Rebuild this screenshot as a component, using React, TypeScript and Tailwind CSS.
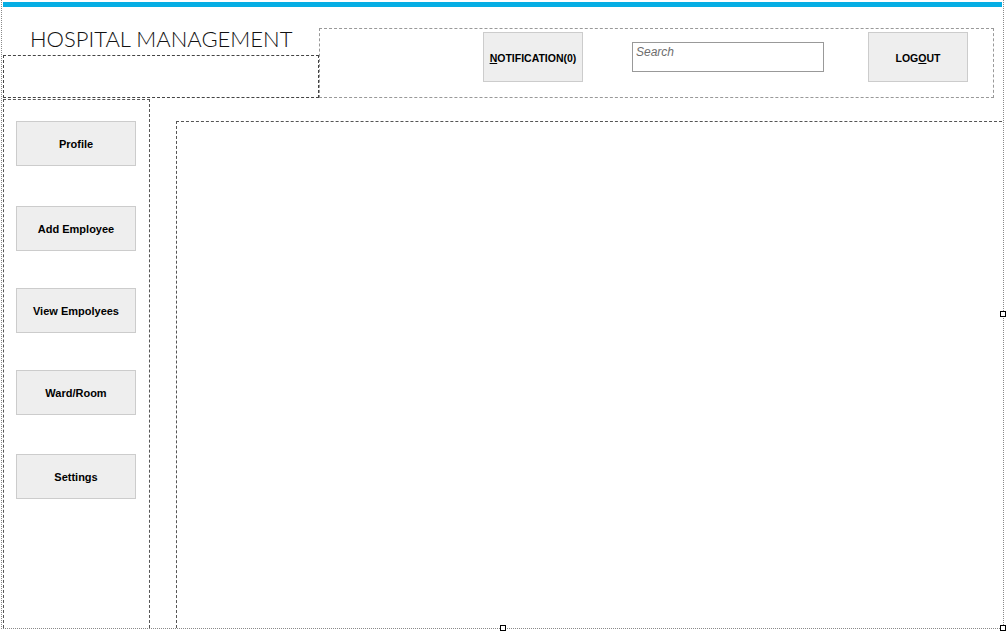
import React from "react";

const sideItems = [
  { label: "Profile", gap: "mt-[21px]" },
  { label: "Add Employee", gap: "mt-[40px]" },
  { label: "View Empolyees", gap: "mt-[37px]" },
  { label: "Ward/Room", gap: "mt-[37px]" },
  { label: "Settings", gap: "mt-[39px]" },
];

const btn = "flex items-center justify-center border border-[#cccccc] bg-[#eeeeee] font-bold text-black";

function Handle({ className }: { className: string }) {
  return <div className={`absolute h-[6px] w-[6px] border border-black bg-white ${className}`} />;
}

export default function App() {
  return (
    <div className="relative h-[631px] w-[1006px] overflow-hidden bg-white" style={{ fontFamily: '"Liberation Sans", Arial, sans-serif' }}>
      <div className="ml-px flex h-[629px] w-[1003px] flex-col overflow-hidden border-x border-b border-dotted border-[#8a8a8a] pl-px pr-px">
        <div className="mt-[2px] h-[5px] shrink-0 bg-[#06aee4]" />

        {/* header */}
        <div className="flex h-[91px] shrink-0">
          <div className="flex w-[316px] shrink-0 flex-col">
            <div className="h-[48px] pl-[27px] pt-[21px]">
              <h1 className="text-[22px] font-light leading-none text-[#111]" style={{ fontFamily: "Lato, sans-serif" }}>
                HOSPITAL MANAGEMENT
              </h1>
            </div>
            <div className="h-[43px] border border-dashed border-[#444]" />
          </div>
          <div className="mt-[21px] flex h-[70px] w-[675px] shrink-0 items-start border border-dashed border-[#999] pl-[163px] pt-[3px]">
            <button className={`${btn} h-[50px] w-[100px] pt-[3px] text-[10.5px]`}>
              <u>N</u>OTIFICATION(0)
            </button>
            <input
              className="ml-[49px] mt-[10px] h-[30px] w-[192px] border border-[#999] bg-white pb-[10px] pl-[3px] text-[12px] italic outline-none placeholder:text-[#6d6d6d]"
              placeholder="Search"
            />
            <button className={`${btn} ml-[44px] h-[50px] w-[100px] pt-[3px] text-[10.5px]`}>
              LOG<u>O</u>UT
            </button>
          </div>
        </div>

        {/* body */}
        <div className="flex min-h-0 flex-1">
          <div className="mt-[1px] flex w-[147px] shrink-0 flex-col border-x border-t border-dashed border-[#555] pl-[12px]">
            {sideItems.map((it) => (
              <button key={it.label} className={`${btn} ${it.gap} h-[45px] w-[120px] pt-[2px] text-[11px]`}>
                {it.label}
              </button>
            ))}
          </div>
          <div className="ml-[26px] mt-[23px] flex-1 border-l border-t border-dashed border-[#555]" />
        </div>
      </div>

      <Handle className="left-[1000px] top-[311px]" />
      <Handle className="left-[500px] top-[625px]" />
      <Handle className="left-[1000px] top-[625px]" />
    </div>
  );
}
